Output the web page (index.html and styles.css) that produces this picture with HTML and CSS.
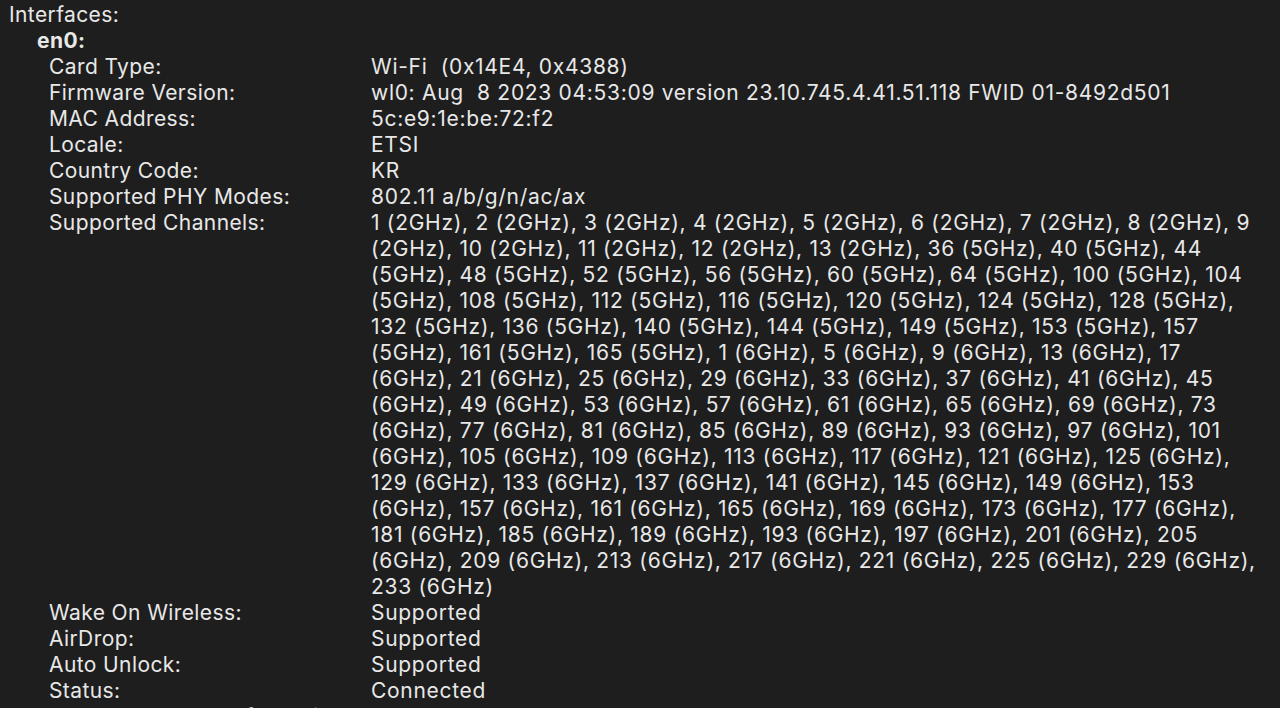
FILE: index.html
```html
<!DOCTYPE html>
<html>
<head>
<meta charset="utf-8">
<link rel="stylesheet" href="styles.css">
</head>
<body>
<div class="report">
  <div class="heading">Interfaces:</div>
  <div class="iface">en0:</div>
  <div class="props">
    <div class="label">Card Type:</div><div class="value">Wi-Fi&nbsp;&nbsp;(0x14E4, 0x4388)</div>
    <div class="label">Firmware Version:</div><div class="value">wl0: Aug&nbsp;&nbsp;8 2023 04:53:09 version 23.10.745.4.41.51.118 FWID 01-8492d501</div>
    <div class="label">MAC Address:</div><div class="value">5c:e9:1e:be:72:f2</div>
    <div class="label">Locale:</div><div class="value">ETSI</div>
    <div class="label">Country Code:</div><div class="value">KR</div>
    <div class="label">Supported PHY Modes:</div><div class="value">802.11 a/b/g/n/ac/ax</div>
    <div class="label">Supported Channels:</div><div class="value">1 (2GHz), 2 (2GHz), 3 (2GHz), 4 (2GHz), 5 (2GHz), 6 (2GHz), 7 (2GHz), 8 (2GHz), 9 (2GHz), 10 (2GHz), 11 (2GHz), 12 (2GHz), 13 (2GHz), 36 (5GHz), 40 (5GHz), 44 (5GHz), 48 (5GHz), 52 (5GHz), 56 (5GHz), 60 (5GHz), 64 (5GHz), 100 (5GHz), 104 (5GHz), 108 (5GHz), 112 (5GHz), 116 (5GHz), 120 (5GHz), 124 (5GHz), 128 (5GHz), 132 (5GHz), 136 (5GHz), 140 (5GHz), 144 (5GHz), 149 (5GHz), 153 (5GHz), 157 (5GHz), 161 (5GHz), 165 (5GHz), 1 (6GHz), 5 (6GHz), 9 (6GHz), 13 (6GHz), 17 (6GHz), 21 (6GHz), 25 (6GHz), 29 (6GHz), 33 (6GHz), 37 (6GHz), 41 (6GHz), 45 (6GHz), 49 (6GHz), 53 (6GHz), 57 (6GHz), 61 (6GHz), 65 (6GHz), 69 (6GHz), 73 (6GHz), 77 (6GHz), 81 (6GHz), 85 (6GHz), 89 (6GHz), 93 (6GHz), 97 (6GHz), 101 (6GHz), 105 (6GHz), 109 (6GHz), 113 (6GHz), 117 (6GHz), 121 (6GHz), 125 (6GHz), 129 (6GHz), 133 (6GHz), 137 (6GHz), 141 (6GHz), 145 (6GHz), 149 (6GHz), 153 (6GHz), 157 (6GHz), 161 (6GHz), 165 (6GHz), 169 (6GHz), 173 (6GHz), 177 (6GHz), 181 (6GHz), 185 (6GHz), 189 (6GHz), 193 (6GHz), 197 (6GHz), 201 (6GHz), 205 (6GHz), 209 (6GHz), 213 (6GHz), 217 (6GHz), 221 (6GHz), 225 (6GHz), 229 (6GHz), 233 (6GHz)</div>
    <div class="label">Wake On Wireless:</div><div class="value">Supported</div>
    <div class="label">AirDrop:</div><div class="value">Supported</div>
    <div class="label">Auto Unlock:</div><div class="value">Supported</div>
    <div class="label">Status:</div><div class="value">Connected</div>
    <div class="label">Current Network Information:</div><div class="value"></div>
  </div>
</div>
</body>
</html>
```

FILE: styles.css
```css
html, body {
  margin: 0;
  padding: 0;
  background: #1e1e1e;
  height: 100%;
  overflow: hidden;
}
.report {
  font-family: Inter, "Liberation Sans", sans-serif;
  font-size: 21px;
  line-height: 26px;
  letter-spacing: 0.4px;
  color: #e8e8e8;
  padding: 2px 0 0 9px;
}
.iface {
  font-weight: 700;
  padding-left: 28px;
}
.props {
  display: grid;
  grid-template-columns: 322px 893px;
  padding-left: 40px;
}
.value {
  min-height: 26px;
  letter-spacing: 0.7px;
}
```
